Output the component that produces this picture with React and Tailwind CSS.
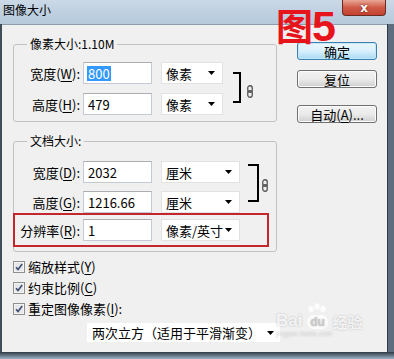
import React from 'react';

const cjk = "font-['Noto_Sans_CJK_SC','Noto_Sans',sans-serif]";

function Arrow() {
  return (
    <svg width="7" height="4" viewBox="0 0 7 4" className="shrink-0">
      <path d="M0 0h7L3.5 4z" fill="#000" />
    </svg>
  );
}

function Chain() {
  return (
    <svg width="6" height="13" viewBox="0 0 6 13">
      <rect x="0.75" y="0.75" width="4.5" height="6.5" rx="2.2" fill="none" stroke="#555" strokeWidth="1.3" />
      <rect x="0.75" y="5.75" width="4.5" height="6.5" rx="2.2" fill="none" stroke="#555" strokeWidth="1.3" />
    </svg>
  );
}

function Field({ value, selected }) {
  return (
    <div className="w-[69px] h-[22px] bg-white border border-[#c3cad2] border-t-[#abadb3] flex items-center pl-[3px] text-[13px] leading-none">
      {selected ? <span className="bg-[#3399ff] text-white px-[1px] py-[1px]">{value}</span> : <span className="pl-[1px]">{value}</span>}
    </div>
  );
}

function Dropdown({ text, wide }) {
  return (
    <div
      className={`${wide ? 'w-[79px]' : 'w-[62px]'} h-[22px] bg-white border border-[#e2e2e2] flex items-center justify-between pl-[4px] pr-[7px] text-[13px] leading-none`}
    >
      <span>{text}</span>
      <Arrow />
    </div>
  );
}

function Label({ children, narrow }) {
  return <div className={`${narrow ? 'w-[65px]' : 'w-[66px]'} text-right text-[13px] leading-none whitespace-nowrap`}>{children}</div>;
}

function U({ children }) {
  return <span className="underline underline-offset-2">{children}</span>;
}

function Check({ children }) {
  return (
    <div className="h-[21px] flex items-center">
      <svg width="12" height="12" viewBox="0 0 12 12" className="shrink-0">
        <rect x="0.5" y="0.5" width="11" height="11" fill="#f4f4f4" stroke="#8e8f8f" />
        <rect x="2" y="2" width="8" height="8" fill="#e4e6ea" />
        <path d="M3 6.2l2 2.2L9.2 3" fill="none" stroke="#3e4e6e" strokeWidth="1.6" />
      </svg>
      <span className="ml-[3px] text-[13px] leading-none">{children}</span>
    </div>
  );
}

function Button({ children, primary, className }) {
  return (
    <div
      className={`${className} w-[80px] rounded-[3px] border flex items-center justify-center text-[13px] leading-none ${
        primary
          ? 'border-[#3c7fb1] bg-gradient-to-b from-[#eaf6fd] via-[#d9f0fc] to-[#a7d9f5] shadow-[inset_0_0_0_1px_#c6e6f9]'
          : 'border-[#707070] bg-gradient-to-b from-[#f2f2f2] via-[#ebebeb] to-[#cfcfcf] shadow-[inset_0_0_0_1px_#fcfcfc]'
      }`}
    >
      {children}
    </div>
  );
}

export default function App() {
  return (
    <div className={`${cjk} relative w-[394px] h-[359px] overflow-hidden flex flex-col bg-[#4d5d6e] text-black`}>
      {/* title bar */}
      <div className="h-[24px] flex justify-between bg-gradient-to-b from-[#cbd9e7] via-[#bfd0e1] to-[#b6c9dc]">
        <div className="pl-[3px] pt-[4px] text-[12px] leading-none">图像大小</div>
        <div className="mr-[8px] w-[44px] h-[16px] rounded-b-[4px] border border-t-0 border-[#6b2a22] bg-gradient-to-b from-[#e8a796] via-[#cf5a47] to-[#c24431] flex items-center justify-center">
          <span className="text-white text-[12px] font-bold leading-none font-['DejaVu_Sans',sans-serif] [text-shadow:0_0_2px_#5a1a10]">x</span>
        </div>
      </div>

      <div className="flex flex-1">
        <div className="w-[2px] bg-[#3f4c5a]" />
        <div className="w-[385px] bg-[#f0f0f0] border-t border-[#8d9dad] flex">
          {/* left column */}
          <div className="pl-[11px] pt-[11px] w-[275px]">
            <fieldset className="w-[264px] border border-[#c2c2c2] rounded-[3px] px-0 pt-[10px] pb-[6px]">
              <legend className="ml-[13px] px-[3px] text-[12px] leading-[16px]">像素大小:1.10M</legend>
              <div className="flex items-start">
                <div className="flex flex-col gap-[9px]">
                  <div className="flex items-center h-[22px]">
                    <Label>宽度(<U>W</U>):</Label>
                    <div className="ml-[3px]"><Field value="800" selected /></div>
                    <div className="ml-[9px]"><Dropdown text="像素" /></div>
                  </div>
                  <div className="flex items-center h-[22px]">
                    <Label>高度(<U>H</U>):</Label>
                    <div className="ml-[3px]"><Field value="479" /></div>
                    <div className="ml-[9px]"><Dropdown text="像素" /></div>
                  </div>
                </div>
                <div className="ml-[10px] mt-[10px] w-[8px] h-[31px] border-2 border-l-0 border-black" />
                <div className="ml-[6px] mt-[23px]"><Chain /></div>
              </div>
            </fieldset>

            <fieldset className="mt-[11px] w-[264px] border border-[#c2c2c2] rounded-[3px] px-0 pt-[12px] pb-[4px]">
              <legend className="ml-[13px] px-[3px] text-[12px] leading-[16px]">文档大小:</legend>
              <div className="flex items-start">
                <div className="flex flex-col gap-[8px]">
                  <div className="flex items-center h-[22px]">
                    <Label>宽度(<U>D</U>):</Label>
                    <div className="ml-[3px]"><Field value="2032" /></div>
                    <div className="ml-[9px]"><Dropdown text="厘米" wide /></div>
                  </div>
                  <div className="flex items-center h-[22px]">
                    <Label>高度(<U>G</U>):</Label>
                    <div className="ml-[3px]"><Field value="1216.66" /></div>
                    <div className="ml-[9px]"><Dropdown text="厘米" wide /></div>
                  </div>
                </div>
                <div className="ml-[8px] mt-[3px] w-[11px] h-[38px] border-2 border-l-0 border-black" />
                <div className="ml-[3px] mt-[18px]"><Chain /></div>
              </div>
              <div className="ml-[-1px] w-[256px] h-[34px] border-2 border-[#c4262e] flex items-center">
                <Label narrow>分辨率(<U>R</U>):</Label>
                <div className="ml-[3px]"><Field value="1" /></div>
                <div className="ml-[9px]"><Dropdown text="像素/英寸" wide /></div>
              </div>
            </fieldset>

            <div className="mt-[4px]">
              <Check>缩放样式(<U>Y</U>)</Check>
              <Check>约束比例(<U>C</U>)</Check>
              <Check>重定图像像素(<U>I</U>):</Check>
            </div>

            <div className="mt-[4px] ml-[74px] w-[193px] h-[19px] bg-white flex items-center justify-between pl-[5px] pr-[6px] text-[13px] leading-none">
              <span>两次立方（适用于平滑渐变）</span>
              <Arrow />
            </div>
          </div>

          {/* buttons */}
          <div className="ml-[20px] pt-[17px] flex flex-col">
            <Button primary className="h-[18px]">确定</Button>
            <Button className="mt-[10px] h-[18px]">复位</Button>
            <Button className="mt-[17px] h-[18px]">自动(<U>A</U>)...</Button>
          </div>
        </div>
        <div className="flex-1 bg-[#5e6e7f] border-l border-[#2f3a46]" />
      </div>
      <div className="h-[7px] bg-gradient-to-b from-[#2f3a46] to-[#9fb4c8]" />

      {/* red annotation */}
      <div className="absolute left-[276px] top-0 flex items-start text-[#e8141b] font-bold leading-none">
        <span className="mt-[7px] text-[37px] leading-none">图</span>
        <span className="mt-[5px] ml-[-1px] text-[43px] leading-none font-['Liberation_Sans',sans-serif]">5</span>
      </div>

      {/* watermark */}
      <div className="absolute left-[276px] top-[303px] text-white/80 [text-shadow:0_0_2px_rgba(0,0,0,0.25)]">
        <div className="flex items-end">
          <span className="text-[17px] font-bold leading-none font-['Liberation_Sans',sans-serif]">Bai</span>
          <div className="relative ml-[1px] w-[28px] h-[26px] flex items-end justify-center">
            <svg width="24" height="16" viewBox="0 0 24 16" className="absolute top-0 left-[2px]">
              <ellipse cx="6" cy="6" rx="2.6" ry="3.2" fill="rgba(255,255,255,0.8)" />
              <ellipse cx="12" cy="3.5" rx="2.6" ry="3.2" fill="rgba(255,255,255,0.8)" />
              <ellipse cx="18" cy="6" rx="2.6" ry="3.2" fill="rgba(255,255,255,0.8)" />
            </svg>
            <span className="rounded-full bg-white/80 text-[#c9c9c9] text-[12px] font-bold leading-none px-[3px] py-[1px] font-['Liberation_Sans',sans-serif]">du</span>
          </div>
          <span className="ml-[1px] text-[15px] font-bold leading-none">经验</span>
        </div>
        <div className="mt-[1px] text-[7px] leading-none text-white/50 font-['Liberation_Sans',sans-serif]">jingyan.baidu.com</div>
      </div>
    </div>
  );
}
